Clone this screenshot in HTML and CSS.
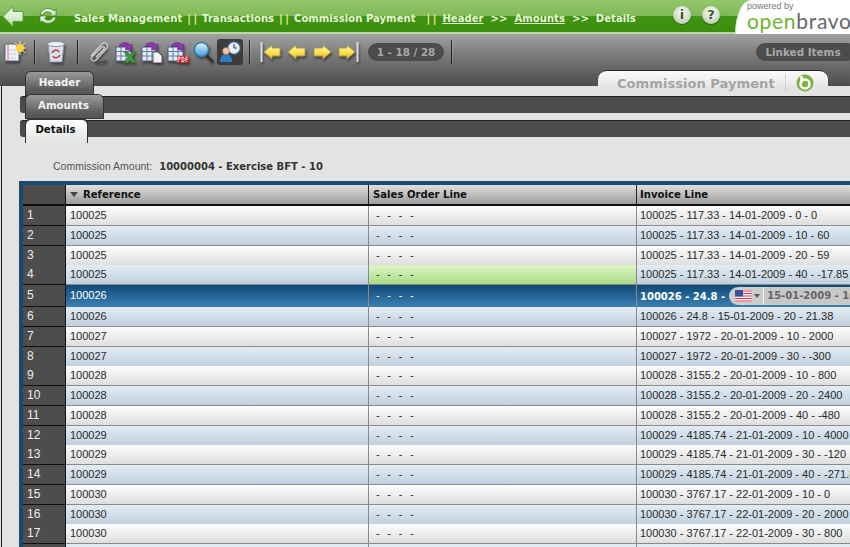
FILE: index.html
```html
<!DOCTYPE html>
<html lang="en">
<head>
<meta charset="utf-8">
<title>Commission Payment</title>
<link rel="stylesheet" href="styles.css">
</head>
<body>
<svg class="defs" width="0" height="0" aria-hidden="true">
  <defs>
    <linearGradient id="gy" x1="0" y1="0" x2="0" y2="1"><stop offset="0" stop-color="#fffbb0"/><stop offset=".55" stop-color="#ffe04a"/><stop offset="1" stop-color="#e8b400"/></linearGradient>
    <linearGradient id="gw" x1="0" y1="0" x2="0" y2="1"><stop offset="0" stop-color="#ffffff"/><stop offset="1" stop-color="#b9dca6"/></linearGradient>
    <linearGradient id="gl" x1="0" y1="0" x2="0" y2="1"><stop offset="0" stop-color="#e6f6ff"/><stop offset="1" stop-color="#3f9bd2"/></linearGradient>
    <symbol id="sheet" viewBox="0 0 22 22">
      <rect x="1" y="6" width="15" height="14" fill="#e4edf6" stroke="#4d6480"/>
      <path d="M1 10.500h15M1 15h15M6 6v14M11 6v14" stroke="#5f7ca0" fill="none"/>
      <path d="M4 6c1-5 8-6 11-2l2-1-1 7-6-2 2-1c-2-2-5-2-8-1z" fill="#8d38b0" stroke="#5d1f7a" stroke-width=".5"/>
    </symbol>
  </defs>
</svg>

<header class="topbar">
  <svg class="ic-back" width="22" height="23" viewBox="0 0 22 23"><path d="M1 11.500 11 1.500v5h10v10H11v5z" fill="url(#gw)" stroke="#5c9c3a"/></svg>
  <svg class="ic-refresh" width="20" height="20" viewBox="0 0 20 20"><path d="M2 9C3 3 11 0 16 5l2-2v7h-7l2.500-2.500C10 4.500 6 6 5 9z" fill="url(#gw)" stroke="#3b7f1c" stroke-width=".8"/><path d="M18 11c-1 6-9 9-14 4l-2 2v-7h7l-2.500 2.500C10 15.500 14 14 15 11z" fill="url(#gw)" stroke="#3b7f1c" stroke-width=".8"/></svg>
  <nav class="crumbs">
    <span>Sales Management</span><i class="bars">| |</i><span>Transactions</span><i class="bars">| |</i><span>Commission Payment</span><i class="bars wide">| |</i><a>Header</a><span class="arrows">&gt;&gt;</span><a>Amounts</a><span class="arrows">&gt;&gt;</span><span>Details</span>
  </nav>
  <span class="round info">i</span>
  <span class="round help">?</span>
  <div class="logo">
    <span class="powered">powered by</span>
    <span class="wordmark"><b>open</b>bravo</span>
  </div>
</header>

<div class="chrome">
  <div class="toolbar">
    <svg class="t t-new" width="22" height="22" viewBox="0 0 22 22"><path d="M1 3h10l4 4v13H1z" fill="#f0f3f8" stroke="#56657a"/><path d="M4 3v17" stroke="#d66" fill="none"/><path d="M4 9h8M4 13h8M4 17h8" stroke="#b9c6d8"/><path d="M16 0v14M9 7h13M11 2l10 10M21 2 11 12" stroke="#ffe98a"/><circle cx="16" cy="7" r="4" fill="#ffd23c"/></svg>
    <span class="sep"></span>
    <svg class="t t-trash" width="20" height="24" viewBox="0 0 20 24"><path d="M2 4h16l-2 18H4z" fill="#d8e0e8" stroke="#8b97a3"/><ellipse cx="10" cy="4" rx="8.500" ry="2.500" fill="#eef2f6" stroke="#8b97a3"/><path d="M6 13c1-3 6-4 7-1M14 15c-1 3-6 4-7 1" stroke="#c53a3a" stroke-width="1.500" fill="none"/></svg>
    <span class="sep s2"></span>
    <svg class="t t-clip" width="22" height="22" viewBox="0 0 22 22"><path d="M3 15 14 3c3-3 7 1 5 4L8 19c-3 3-6-1-4-3L14 6c1-1 3 0 2 2L8 16" stroke="#cfcfcf" stroke-width="1.300" fill="none"/><path d="M7 21c5 1 9 0 12-1" stroke="#444" stroke-width="1.500" fill="none"/></svg>
    <svg class="t t-xls" width="22" height="22" viewBox="0 0 22 22"><use href="#sheet"/><path d="M9 11h4l2 3 2-3h4l-4 5 4 6h-4l-2-3-2 3H9l4-6z" fill="#3f9c35" stroke="#1e5c19" stroke-width=".5"/></svg>
    <svg class="t t-doc" width="22" height="22" viewBox="0 0 22 22"><use href="#sheet"/><path d="M12 11h5l4 4v7h-9z" fill="#f4f4f4" stroke="#555"/></svg>
    <svg class="t t-pdf" width="22" height="22" viewBox="0 0 22 22"><use href="#sheet"/><rect x="10" y="15" width="12" height="7" fill="#c8262c"/><path d="M11 21v-5h2v2h-2M15 21v-5h1l1 1v3l-1 1zM19 21v-5h2M19 18.500h2" stroke="#fff" stroke-width=".8" fill="none"/></svg>
    <svg class="t t-find" width="22" height="22" viewBox="0 0 22 22"><path d="m13 14 7 7" stroke="#333" stroke-width="3"/><circle cx="8.500" cy="8.500" r="7" fill="url(#gl)" stroke="#2b7fb3" stroke-width="1.500"/></svg>
    <span class="t-audit"><svg width="22" height="22" viewBox="0 0 22 22"><circle cx="15" cy="7" r="6.500" fill="#e9eef5" stroke="#3a5578" stroke-width="1.500"/><path d="M15 3v4h3" stroke="#233a5a" fill="none"/><path d="M1 21c0-6 3-8 6-8s6 2 6 8z" fill="#2b7fc0"/><circle cx="7" cy="10" r="3.500" fill="#f2c4a8" stroke="#a8553c" stroke-width=".5"/></svg></span>
    <span class="sep s3"></span>
    <svg class="t t-first" width="21" height="22" viewBox="0 0 21 22"><path d="M1.500 1v20" stroke="#ddd" stroke-width="2"/><path d="M4 11l8-7v3h8v8h-8v3z" fill="url(#gy)" stroke="#a89c5a"/></svg>
    <svg class="t t-prev" width="19" height="16" viewBox="0 0 19 16"><path d="M1 8l8-7v3h9v8H9v3z" fill="url(#gy)" stroke="#a89c5a"/></svg>
    <svg class="t t-next" width="19" height="16" viewBox="0 0 19 16"><path d="M18 8l-8-7v3H1v8h9v3z" fill="url(#gy)" stroke="#a89c5a"/></svg>
    <svg class="t t-last" width="21" height="22" viewBox="0 0 21 22"><path d="M19.500 1v20" stroke="#ddd" stroke-width="2"/><path d="M17 11 9 4v3H1v8h8v3z" fill="url(#gy)" stroke="#a89c5a"/></svg>
    <span class="pill count">1 - 18 / 28</span>
    <span class="sep s4"></span>
    <span class="pill linked">Linked Items</span>
  </div>
  <div class="strip">
    <span class="tab dark t-header">Header</span>
    <div class="maintab">
      <span class="maintitle">Commission Payment</span>
      <span class="tabrule"></span>
      <svg class="bmark" width="18" height="18" viewBox="0 0 18 18"><circle cx="9" cy="9" r="8.500" fill="#7cb342"/><circle cx="9" cy="10" r="4.500" fill="none" stroke="#fff" stroke-width="2.500"/><path d="M5.500 2v7" stroke="#fff" stroke-width="2.500"/></svg>
    </div>
  </div>
</div>

<main class="content">
  <div class="level l2"><div class="bar"></div><span class="tab dark t-amounts">Amounts</span></div>
  <div class="level l3"><div class="bar"></div><span class="tab active t-details">Details</span></div>

  <p class="summary"><span class="lbl">Commission Amount:</span><b>10000004 - Exercise BFT - 10</b></p>

  <section class="grid">
    <div class="row head"><div class="num"></div><div class="cell"><i class="sort"></i>Reference</div><div class="cell">Sales Order Line</div><div class="cell">Invoice Line</div></div>
    <div class="row odd"><div class="num">1</div><div class="cell">100025</div><div class="cell dash">- - - -</div><div class="cell">100025 - 117.33 - 14-01-2009 - 0 - 0</div></div>
    <div class="row even"><div class="num">2</div><div class="cell">100025</div><div class="cell dash">- - - -</div><div class="cell">100025 - 117.33 - 14-01-2009 - 10 - 60</div></div>
    <div class="row odd"><div class="num">3</div><div class="cell">100025</div><div class="cell dash">- - - -</div><div class="cell">100025 - 117.33 - 14-01-2009 - 20 - 59</div></div>
    <div class="row even"><div class="num">4</div><div class="cell">100025</div><div class="cell dash green">- - - -</div><div class="cell">100025 - 117.33 - 14-01-2009 - 40 - -17.85</div></div>
    <div class="row sel"><div class="num">5</div><div class="cell">100026</div><div class="cell dash">- - - -</div><div class="cell inv"><b>100026 - 24.8 -</b><span class="flagbox"><svg width="17" height="12" viewBox="0 0 17 12"><rect width="17" height="12" fill="#fff"/><path d="M0 1h17M0 3.500h17M0 6h17M0 8.500h17M0 11h17" stroke="#d8343c" stroke-width="1.200"/><rect width="8" height="6.500" fill="#3b4f9e"/></svg><i class="caret"></i></span><b class="field">15-01-2009 - 10 - 3.4</b></div></div>
    <div class="row even"><div class="num">6</div><div class="cell">100026</div><div class="cell dash">- - - -</div><div class="cell">100026 - 24.8 - 15-01-2009 - 20 - 21.38</div></div>
    <div class="row odd"><div class="num">7</div><div class="cell">100027</div><div class="cell dash">- - - -</div><div class="cell">100027 - 1972 - 20-01-2009 - 10 - 2000</div></div>
    <div class="row even"><div class="num">8</div><div class="cell">100027</div><div class="cell dash">- - - -</div><div class="cell">100027 - 1972 - 20-01-2009 - 30 - -300</div></div>
    <div class="row odd"><div class="num">9</div><div class="cell">100028</div><div class="cell dash">- - - -</div><div class="cell">100028 - 3155.2 - 20-01-2009 - 10 - 800</div></div>
    <div class="row even"><div class="num">10</div><div class="cell">100028</div><div class="cell dash">- - - -</div><div class="cell">100028 - 3155.2 - 20-01-2009 - 20 - 2400</div></div>
    <div class="row odd"><div class="num">11</div><div class="cell">100028</div><div class="cell dash">- - - -</div><div class="cell">100028 - 3155.2 - 20-01-2009 - 40 - -480</div></div>
    <div class="row even"><div class="num">12</div><div class="cell">100029</div><div class="cell dash">- - - -</div><div class="cell">100029 - 4185.74 - 21-01-2009 - 10 - 4000</div></div>
    <div class="row odd"><div class="num">13</div><div class="cell">100029</div><div class="cell dash">- - - -</div><div class="cell">100029 - 4185.74 - 21-01-2009 - 30 - -120</div></div>
    <div class="row even"><div class="num">14</div><div class="cell">100029</div><div class="cell dash">- - - -</div><div class="cell">100029 - 4185.74 - 21-01-2009 - 40 - -271.89</div></div>
    <div class="row odd"><div class="num">15</div><div class="cell">100030</div><div class="cell dash">- - - -</div><div class="cell">100030 - 3767.17 - 22-01-2009 - 10 - 0</div></div>
    <div class="row even"><div class="num">16</div><div class="cell">100030</div><div class="cell dash">- - - -</div><div class="cell">100030 - 3767.17 - 22-01-2009 - 20 - 2000</div></div>
    <div class="row odd"><div class="num">17</div><div class="cell">100030</div><div class="cell dash">- - - -</div><div class="cell">100030 - 3767.17 - 22-01-2009 - 30 - 800</div></div>
    <div class="row even"><div class="num"></div><div class="cell"></div><div class="cell"></div><div class="cell"></div></div>
  </section>
</main>
</body>
</html>
```

FILE: styles.css
```css
* { box-sizing: border-box; }
html, body { margin: 0; height: 547px; overflow: hidden; }
body { background: #e3e3e3; font: 11px "Liberation Sans", sans-serif; color: #222; width: 850px; }
.defs { display: block; height: 0; }

/* top bar */
.topbar {
  height: 34px; display: flex; align-items: center; overflow: hidden;
  background: linear-gradient(#93c76c 0, #7fb856 47%, #419512 48%, #3c8e0e 94%, #b9d8a4 95%, #b9d8a4 100%);
}
.ic-back { margin: 0 0 2px 2px; }
.ic-refresh { margin: 0 0 2px 14px; }
.crumbs {
  margin: 3px 0 0 16px; display: flex; width: 560px; white-space: nowrap;
  font: bold 10.1px "DejaVu Sans", sans-serif; color: #e6f5d8;
}
.crumbs a { color: #e6f5d8; text-decoration: underline; }
.bars { font-style: normal; color: #f2e6a0; margin: 0 5px; word-spacing: -1px; }
.bars.wide { margin: 0 6px 0 11px; }
.arrows { margin: 0 7px; }
.round {
  width: 18px; height: 18px; border-radius: 50%; display: flex; align-items: center; justify-content: center;
  background: radial-gradient(circle at 50% 35%, #fff, #a9bf9c); color: #3a5a24;
  font: bold 13px "DejaVu Sans", sans-serif; box-shadow: 0 1px 1px #24600a;
}
.info { margin: 0 0 5px 39px; }
.help { margin: 0 0 5px 11px; }
.logo {
  margin-left: 15px; flex: 1; height: 34px; background: #fff; border-radius: 16px 0 0 0 / 34px 0 0 0;
  border-left: 1px solid #d8e6cc; padding: 2px 0 0 11px; overflow: hidden;
}
.powered { display: block; font-size: 9px; line-height: 9px; color: #777; }
.wordmark { display: block; font: 21px/19px Lato, sans-serif; letter-spacing: .7px; color: #666; white-space: nowrap; }
.wordmark b { font-weight: 400; color: #6fb52c; }

/* chrome */
.chrome { background: linear-gradient(#a2a2a2 0, #7b7b7b 40%, #4c4c4c 100%); height: 52px; }
.toolbar { height: 36px; display: flex; align-items: center; padding: 0 0 0 4px; white-space: nowrap; }
.t { flex: none; filter: drop-shadow(1px 2px 1px rgba(0,0,0,.45)); }
.sep { width: 1px; height: 24px; background: #222; margin-left: 8px; flex: none; box-shadow: 1px 0 0 rgba(255,255,255,.15); }
.t-trash { margin-left: 11px; }
.s2 { margin-left: 11px; }
.t-clip { margin-left: 10px; }
.t-xls { margin-left: 5px; }
.t-doc, .t-pdf, .t-find { margin-left: 4px; }
.t-audit {
  margin-left: 2px; width: 26px; height: 26px; display: flex; align-items: center; justify-content: center;
  background: #3c3c3c; border-radius: 3px; flex: none;
}
.s3 { margin-left: 6px; }
.t-first { margin-left: 10px; }
.t-prev { margin-left: 6px; }
.t-next { margin-left: 7px; }
.t-last { margin-left: 6px; }
.pill {
  height: 18px; border-radius: 9px; background: #4c4c4c; color: #a8a8a8;
  font: bold 10.4px/18px "DejaVu Sans", sans-serif; text-align: center; flex: none;
}
.count { width: 76px; margin-left: 9px; }
.s4 { margin-left: 7px; }
.linked { width: 100px; margin-left: 304px; padding-right: 6px; }

.strip { height: 16px; display: flex; justify-content: space-between; padding: 0 22px 0 26px; align-items: flex-start; }
.tab {
  display: block; height: 23px; border-radius: 5px 5px 0 0; text-align: center; white-space: nowrap;
  font: bold 10.2px/22px "DejaVu Sans", sans-serif;
}
.tab.dark { background: linear-gradient(#9a9a9a, #5a5a5a 80%, #555); color: #f2f2f2; box-shadow: 0 0 0 1px #333; }
.tab.active { background: linear-gradient(#fff, #e3e3e3); color: #111; box-shadow: 0 -1px 0 1px #333; }
.t-header { width: 67px; margin-top: 2px; position: relative; z-index: 1; }
.maintab {
  width: 230px; height: 16px; background: linear-gradient(#fafafa, #e8e8e8); border-radius: 9px 9px 0 0;
  display: flex; align-items: flex-start; padding: 3px 0 0 19px; border-top: 1px solid #222;
}
.maintitle { font: bold 13.1px/20px "DejaVu Sans", sans-serif; color: #a4a4a4; white-space: nowrap; }
.tabrule { width: 1px; height: 18px; background: #cfcfcf; margin-left: 10px; flex: none; }
.bmark { margin-left: 10px; flex: none; }

/* content */
.content { margin-left: 1px; border-left: 1px solid #1f1f1f; background: #e3e3e3; height: 461px; overflow: hidden; padding-top: 9px; }
.level { display: grid; padding-left: 18px; }
.level > * { grid-area: 1 / 1; }
.bar { background: #4c4c4c; height: 16px; border-radius: 3px 0 0 3px; box-shadow: 0 -1px 0 #222; }
.level .tab { margin-left: 6px; justify-self: start; position: relative; }
.l2 { height: 24px; margin-top: 2px; }
.t-amounts { width: 77px; margin-top: -2px; z-index: 1; padding-right: 2px; }
.l3 { height: 24px; }
.t-details { width: 61px; margin-top: -1px; line-height: 20px; padding-right: 2px; }
.summary { margin: 14px 0 0 51px; height: 14px; display: flex; align-items: center; line-height: 14px; }
.lbl { color: #555; font-size: 10.5px; }
.summary b { font: bold 10px "DejaVu Sans", sans-serif; color: #333; margin-left: 7px; }

/* grid */
.grid { margin: 8px 0 0 17px; border-top: 4px solid #1d4a6c; border-left: 4px solid #1d4a6c; width: 840px; }
.row { display: grid; grid-template-columns: 43px 302px 268px 227px; height: 19.75px; }
.num { background: #4d4d4d; color: #eee; padding-left: 4px; line-height: 19px; border-right: 1px solid #111; border-bottom: 1px solid #111; font-size: 12px; }
.cell { padding-left: 4px; border-left: 1px solid #8a8a8a; border-bottom: 1px solid #8a8a8a; line-height: 19px; white-space: nowrap; overflow: hidden; color: #2a2a2a; }
.row .cell:nth-child(2) { border-left: 0; }
.row .cell:nth-child(4) { padding-left: 3px; }
.dash { word-spacing: 4.6px; padding-left: 7px; }
.odd .cell { background: linear-gradient(#fdfdfd, #dedede); }
.even .cell { background: linear-gradient(#e4ecf4, #c0d0de); }
.even .cell.green { background: linear-gradient(#def5c8, #a9dc85); }
.head { height: 21px; }
.head .num { border-bottom: 2px solid #111; }
.head .cell { background: linear-gradient(#e0e0e0, #9c9c9c); border-left-color: #222; border-bottom: 2px solid #111; font: bold 10.1px/20px "DejaVu Sans", sans-serif; color: #111; }
.sort { display: inline-block; border: 4px solid transparent; border-top: 5px solid #444; border-bottom: 0; margin: 0 5px 1px 0; }
.row.sel { height: 22px; }
.sel .cell, .sel .num { line-height: 21px; }
.sel .cell { background: linear-gradient(#0f4a78, #3b80b2); color: #fff; border-bottom: 0; }
.inv { display: flex; align-items: center; }
.inv b { font: bold 10px "DejaVu Sans", sans-serif; }
.flagbox {
  flex: none; width: 34px; height: 18px; margin-left: 4px; background: #cdcdcd; border-radius: 9px 0 0 9px;
  display: flex; align-items: center; padding-left: 6px; gap: 2px;
}
.caret { border: 3px solid transparent; border-top: 4px solid #555; border-bottom: 0; }
.inv .field { flex: none; width: 90px; height: 18px; line-height: 18px; background: #c8c8c8; color: #666; padding-left: 3px; border-left: 1px solid #eee; overflow: hidden; white-space: nowrap; }
```
